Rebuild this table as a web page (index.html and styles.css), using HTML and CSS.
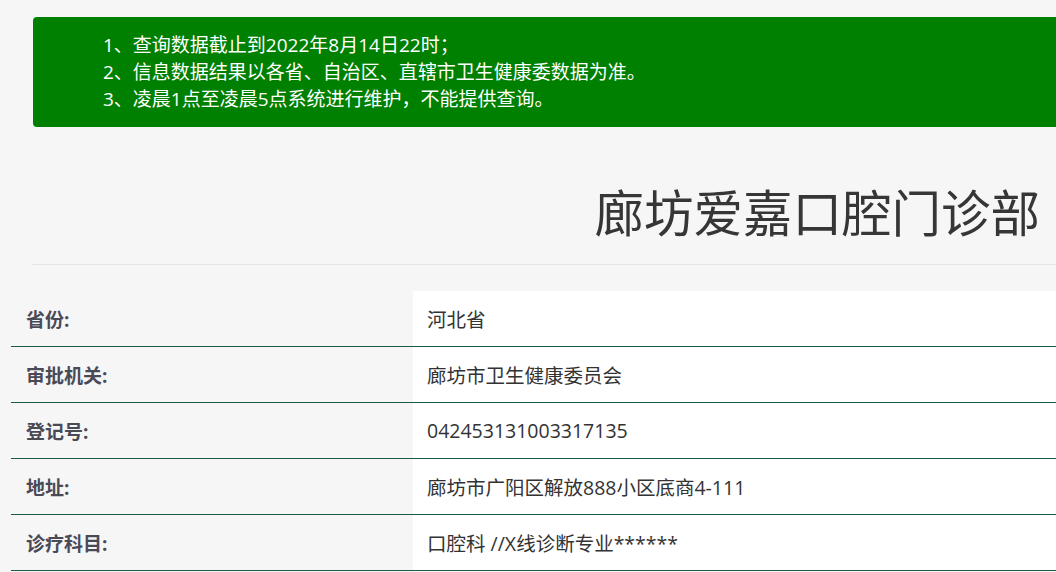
FILE: index.html
```html
<!DOCTYPE html>
<html lang="zh-CN">
<head>
    <meta charset="UTF-8">
    <meta name="viewport" content="width=device-width, initial-scale=1.0">
    <title>廊坊爱嘉口腔门诊部</title>
    <link rel="stylesheet" href="styles.css">
</head>
<body>
    <div class="notice-wrap">
        <div class="notice">
            <p>1、查询数据截止到2022年8月14日22时；</p>
            <p>2、信息数据结果以各省、自治区、直辖市卫生健康委数据为准。</p>
            <p>3、凌晨1点至凌晨5点系统进行维护，不能提供查询。</p>
        </div>
    </div>

    <h1 class="title">廊坊爱嘉口腔门诊部</h1>
    <hr class="divider">

    <table class="info">
        <tr>
            <th>省份:</th>
            <td>河北省</td>
        </tr>
        <tr>
            <th>审批机关:</th>
            <td>廊坊市卫生健康委员会</td>
        </tr>
        <tr>
            <th>登记号:</th>
            <td>042453131003317135</td>
        </tr>
        <tr>
            <th>地址:</th>
            <td>廊坊市广阳区解放888小区底商4-111</td>
        </tr>
        <tr>
            <th>诊疗科目:</th>
            <td>口腔科 //X线诊断专业******</td>
        </tr>
    </table>
</body>
</html>
```

FILE: styles.css
```css
body {
    margin: 0;
    background-color: #f6f6f6;
    font-family: "Open Sans", "Noto Sans CJK SC", sans-serif;
    overflow-x: hidden;
}
.notice-wrap {
    padding: 17px 0 0 33px;
}
.notice {
    background-color: #008000;
    color: #ffffff;
    border-radius: 4px;
    margin-right: -20px;
    padding: 15px 0 14px 70px;
    font-size: 19px;
    line-height: 27px;
}
.notice p {
    margin: 0;
}
.title {
    margin: 56px 0 0 0;
    padding-right: 16px;
    text-align: right;
    font-size: 49.5px;
    font-weight: normal;
    line-height: 60px;
    color: #363636;
}
.divider {
    margin: 21px 0 0 32px;
    border: none;
    border-top: 1px solid #e6e6e6;
}
.info {
    margin: 26px 0 0 11px;
    width: 1080px;
    border-collapse: collapse;
    font-size: 19px;
}
.info tr {
    border-bottom: 1px solid #1d5b47;
}
.info th {
    width: 387px;
    height: 55px;
    padding: 0 0 0 15px;
    text-align: left;
    font-weight: bold;
    color: #4a4a57;
}
.info td {
    height: 55px;
    padding: 0 0 0 14px;
    background-color: #ffffff;
    color: #333333;
    font-size: 19.5px;
}
```
